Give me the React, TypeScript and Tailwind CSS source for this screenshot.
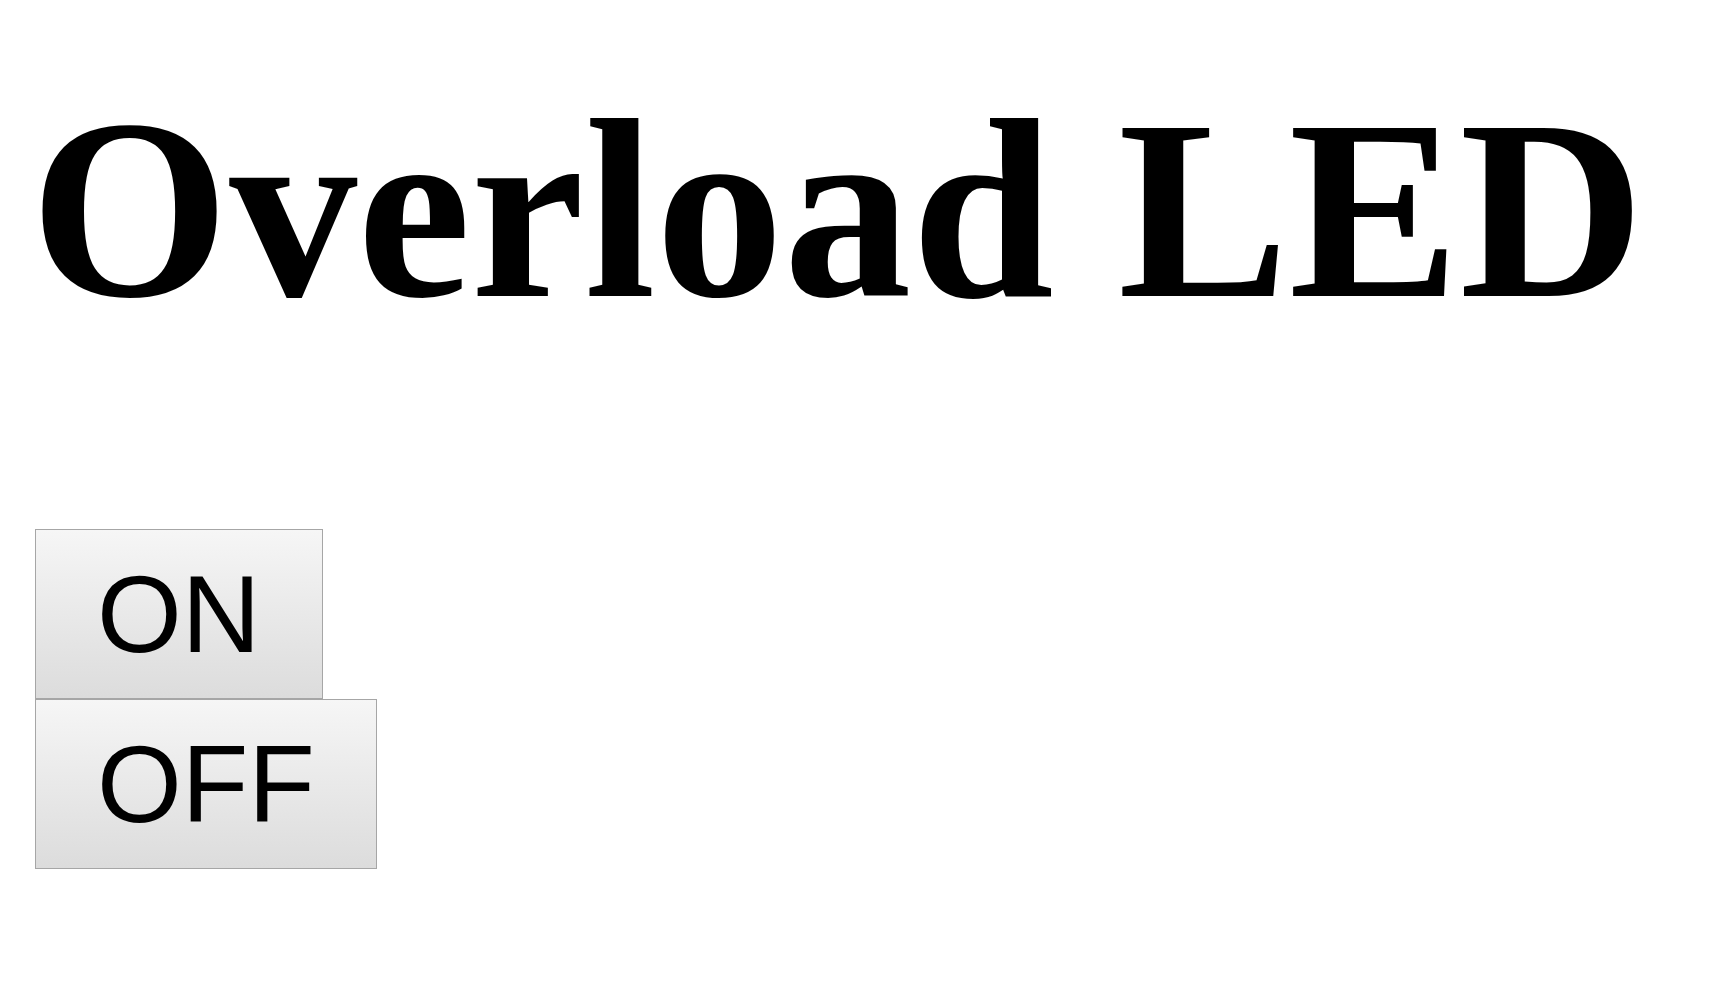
export default function App() {
  const btn =
    "border border-[#a6a6a6] bg-gradient-to-b from-[#f6f6f6] to-[#dcdcdc] px-[61px] py-[21px] text-[109px] leading-[normal] text-black [font-family:'Liberation_Sans',Arial,sans-serif]";

  return (
    <main className="min-h-screen bg-white">
      <h1 className="pl-[30px] pt-[63px] text-[256px] font-bold leading-[normal] whitespace-nowrap text-black [font-family:'Liberation_Serif','Times_New_Roman',serif]">
        Overload LED
      </h1>
      <div className="mt-[172px] flex flex-col items-start pl-[35px]">
        <button className={btn}>ON</button>
        <button className={btn}>OFF</button>
      </div>
    </main>
  );
}
